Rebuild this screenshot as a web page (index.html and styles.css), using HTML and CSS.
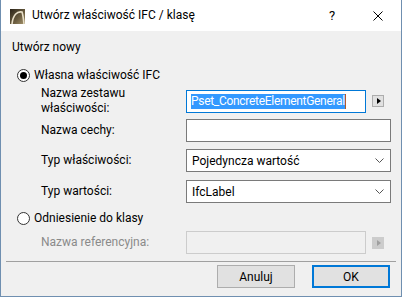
FILE: index.html
```html
<!DOCTYPE html>
<html lang="pl">
<head>
    <meta charset="UTF-8">
    <title>Utwórz właściwość IFC / klasę</title>
    <link rel="stylesheet" href="styles.css">
</head>
<body>
    <div class="window">
        <div class="titlebar">
            <svg class="app-icon" width="15" height="15" viewBox="0 0 15 15">
                <defs>
                    <linearGradient id="ig" x1="0" y1="0" x2="1" y2="1">
                        <stop offset="0" stop-color="#2b2418"/>
                        <stop offset="0.6" stop-color="#6b5d40"/>
                        <stop offset="1" stop-color="#a89770"/>
                    </linearGradient>
                </defs>
                <rect width="15" height="15" fill="url(#ig)"/>
                <path d="M2 15 C3 6 7 2 12 3 C13 6 13.5 10 14 15" fill="none" stroke="#e8dfc8" stroke-width="1.6"/>
            </svg>
            <span class="title">Utwórz właściwość IFC / klasę</span>
            <div class="caption-btn help">?</div>
            <div class="caption-btn close">
                <svg width="10" height="10" viewBox="0 0 10 10">
                    <path d="M0.5 0.5 L9.5 9.5 M9.5 0.5 L0.5 9.5" stroke="#000" stroke-width="1"/>
                </svg>
            </div>
        </div>

        <div class="content">
            <div class="group-title">Utwórz nowy</div>

            <div class="radio-row first">
                <span class="radio checked"></span>
                <span>Własna właściwość IFC</span>
            </div>

            <div class="field first">
                <label class="label two-line">Nazwa zestawu<br>właściwości:</label>
                <div class="input short focused">
                    <span class="selected">Pset_ConcreteElementGeneral</span><span class="caret"></span>
                </div>
                <div class="arrow-btn"><span class="tri"></span></div>
            </div>

            <div class="field">
                <label class="label">Nazwa cechy:</label>
                <div class="input wide"></div>
            </div>

            <div class="field">
                <label class="label">Typ właściwości:</label>
                <div class="input wide select">
                    <span>Pojedyncza wartość</span>
                    <svg class="chevron" width="9" height="5" viewBox="0 0 9 5"><path d="M0.5 0.5 L4.5 4.5 L8.5 0.5" fill="none" stroke="#555" stroke-width="1"/></svg>
                </div>
            </div>

            <div class="field value-type">
                <label class="label">Typ wartości:</label>
                <div class="input wide select">
                    <span>IfcLabel</span>
                    <svg class="chevron" width="9" height="5" viewBox="0 0 9 5"><path d="M0.5 0.5 L4.5 4.5 L8.5 0.5" fill="none" stroke="#555" stroke-width="1"/></svg>
                </div>
            </div>

            <div class="radio-row second">
                <span class="radio"></span>
                <span>Odniesienie do klasy</span>
            </div>

            <div class="field last">
                <label class="label disabled">Nazwa referencyjna:</label>
                <div class="input short disabled"></div>
                <div class="arrow-btn disabled"><span class="tri"></span></div>
            </div>

            <hr class="separator">

            <div class="buttons">
                <button class="btn">Anuluj</button>
                <button class="btn default">OK</button>
            </div>
        </div>
    </div>
</body>
</html>
```

FILE: styles.css
```css
body{
    margin: 0;
    font-family: Roboto, "Liberation Sans", sans-serif;
    font-size: 12px;
    color: #000;
}

.window{
    width: 402px;
    height: 297px;
    box-sizing: border-box;
    border: 1px solid #6f8fb0;
    border-top: none;
    background: #f0f0f0;
    display: flex;
    flex-direction: column;
}

.titlebar{
    height: 31px;
    flex: none;
    background: #fff;
    display: flex;
    align-items: center;
    padding-left: 9px;
}

.app-icon{
    margin-right: 7px;
    margin-top: 1px;
}

.title{
    flex: 1;
    padding-bottom: 1px;
}

.caption-btn{
    width: 46px;
    height: 31px;
    display: flex;
    align-items: center;
    justify-content: center;
}

.help{
    font-size: 13px;
    padding-bottom: 1px;
}

.content{
    flex: 1;
    display: flex;
    flex-direction: column;
}

.group-title{
    margin: 8px 0 0 11px;
    height: 16px;
    line-height: 16px;
}

.radio-row{
    display: flex;
    align-items: center;
    height: 16px;
    padding-left: 16px;
}

.radio-row.first{
    margin-top: 12px;
}

.radio-row.second{
    margin-top: 7px;
}

.radio{
    width: 11px;
    height: 11px;
    border: 1px solid #333;
    border-radius: 50%;
    background: #fff;
    margin-right: 4px;
    display: flex;
    align-items: center;
    justify-content: center;
}

.radio.checked::after{
    content: "";
    width: 7px;
    height: 7px;
    border-radius: 50%;
    background: #000;
}

.field{
    display: flex;
    align-items: center;
    height: 23px;
    padding-left: 40px;
    margin-top: 7px;
}

.field.first{
    height: 30px;
    margin-top: 3px;
}

.field.first + .field{
    margin-top: 3px;
}

.field.value-type{
    margin-top: 8px;
}

.field.last{
    margin-top: 5px;
}

.label{
    width: 145px;
    line-height: 15px;
}

.label.disabled{
    color: #8a8a8a;
}

.input{
    height: 23px;
    box-sizing: border-box;
    border: 1px solid #7a7a7a;
    background: #fff;
    display: flex;
    align-items: center;
    padding: 0 5px;
}

.input.short{
    width: 180px;
}

.input.wide{
    width: 205px;
}

.input.focused{
    border-color: #0078d7;
    padding-left: 4px;
}

.input.disabled{
    border-color: #cccccc;
    background: #f0f0f0;
}

.selected{
    background: #3399ff;
    color: #fff;
    line-height: 15px;
    white-space: nowrap;
    letter-spacing: -0.3px;
}

.caret{
    flex: none;
    width: 1px;
    height: 15px;
    background: #b05c2a;
}

.select{
    justify-content: space-between;
}

.chevron{
    margin-right: 1px;
}

.arrow-btn{
    width: 12px;
    height: 12px;
    box-sizing: border-box;
    border: 1px solid #adadad;
    background: #e1e1e1;
    margin-left: 6px;
    display: flex;
    align-items: center;
    justify-content: center;
}

.tri{
    width: 0;
    height: 0;
    border-top: 3.5px solid transparent;
    border-bottom: 3.5px solid transparent;
    border-left: 4px solid #000;
    margin-left: 1px;
}

.arrow-btn.disabled{
    border-color: #cccccc;
    background: #cccccc;
}

.arrow-btn.disabled .tri{
    border-left-color: #a0a0a0;
}

.separator{
    margin: 7px 5px 0 5px;
    border: none;
    border-top: 1px solid #a0a0a0;
    height: 0;
}

.buttons{
    display: flex;
    justify-content: flex-end;
    gap: 17px;
    margin-top: 3px;
    padding-right: 11px;
}

.btn{
    width: 78px;
    height: 23px;
    box-sizing: border-box;
    border: 1px solid #adadad;
    background: #e1e1e1;
    font-family: inherit;
    font-size: 12px;
    color: #000;
    padding: 0;
}

.btn.default{
    border: 2px solid #0078d7;
}
```
